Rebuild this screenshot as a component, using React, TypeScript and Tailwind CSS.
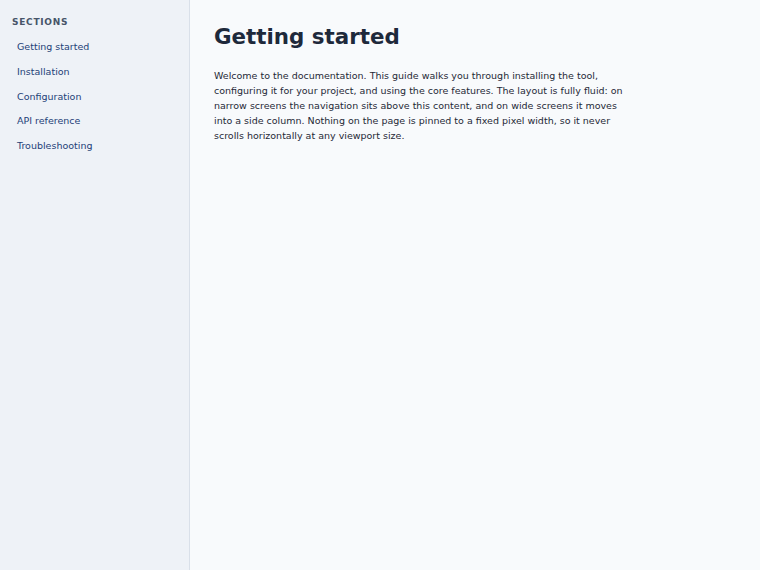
import React from "react";

const sections = [
  "Getting started",
  "Installation",
  "Configuration",
  "API reference",
  "Troubleshooting",
];

export default function App() {
  return (
    <div
      className="flex min-h-screen w-full bg-[#f8fafc]"
      style={{ fontFamily: '"DejaVu Sans", sans-serif' }}
    >
      <aside className="w-[190px] shrink-0 border-r border-[#d9e0e9] bg-[#eef2f7] px-3 pt-[16px]">
        <h2 className="text-[9px] font-bold uppercase leading-[12px] tracking-[0.08em] text-[#475569]">
          Sections
        </h2>
        <nav className="mt-[7px] flex flex-col">
          {sections.map((s) => (
            <a
              key={s}
              href="#"
              className="block px-[5px] py-[5px] text-[9.5px] leading-[14.75px] text-[#243f78]"
            >
              {s}
            </a>
          ))}
        </nav>
      </aside>
      <main className="min-w-0 flex-1 px-6 pt-[23px]">
        <h1 className="text-[21.4px] font-bold leading-[28px] text-[#1e293b]">
          Getting started
        </h1>
        <p className="mt-[17px] max-w-[416px] text-[9.5px] leading-[15px] text-[#1f2937]">
          Welcome to the documentation. This guide walks you through installing
          the tool, configuring it for your project, and using the core
          features. The layout is fully fluid: on narrow screens the navigation
          sits above this content, and on wide screens it moves into a side
          column. Nothing on the page is pinned to a fixed pixel width, so it
          never scrolls horizontally at any viewport size.
        </p>
      </main>
    </div>
  );
}
